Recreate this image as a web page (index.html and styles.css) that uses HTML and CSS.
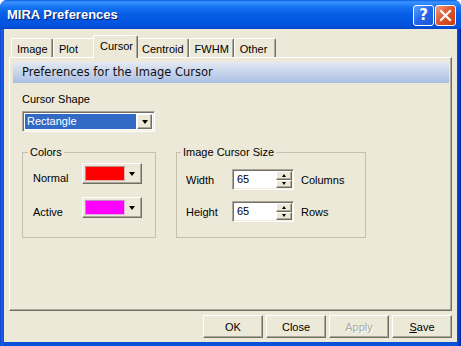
FILE: index.html
```html
<!DOCTYPE html>
<html lang="en">
<head>
    <meta charset="UTF-8">
    <title>MIRA Preferences</title>
    <link rel="stylesheet" href="styles.css">
</head>
<body>

<div class="window">
    <!-- Title bar -->
    <div class="titlebar">
        <span class="title">MIRA Preferences</span>
        <div class="caption-buttons">
            <span class="cap-btn help">?</span>
            <span class="cap-btn close">
                <svg width="19" height="19" viewBox="0 0 19 19"><path d="M5 5 L14 14 M14 5 L5 14" stroke="#fff" stroke-width="2.2" stroke-linecap="square"/></svg>
            </span>
        </div>
    </div>

    <div class="client">
        <!-- Tabs -->
        <div class="tabs">
            <span class="tab">Image</span>
            <span class="tab">Plot</span>
            <span class="tab active">Cursor</span>
            <span class="tab">Centroid</span>
            <span class="tab">FWHM</span>
            <span class="tab">Other</span>
        </div>

        <div class="panel">
            <div class="band">Preferences for the Image Cursor</div>

            <div class="panel-body">
                <div class="field-label">Cursor Shape</div>
                <div class="combo">
                    <span class="combo-sel">Rectangle</span>
                    <span class="drop-btn"><i class="arrow"></i></span>
                </div>

                <div class="groups">
                    <fieldset class="group colors">
                        <legend>Colors</legend>
                        <div class="row">
                            <span class="lbl">Normal</span>
                            <span class="color-btn"><span class="swatch red"></span><i class="arrow"></i></span>
                        </div>
                        <div class="row">
                            <span class="lbl">Active</span>
                            <span class="color-btn"><span class="swatch magenta"></span><i class="arrow"></i></span>
                        </div>
                    </fieldset>

                    <fieldset class="group size">
                        <legend>Image Cursor Size</legend>
                        <div class="row">
                            <span class="lbl">Width</span>
                            <span class="spin">
                                <span class="spin-val">65</span>
                                <span class="spin-btns">
                                    <span class="spin-btn"><i class="tri-up"></i></span>
                                    <span class="spin-btn"><i class="tri-down"></i></span>
                                </span>
                            </span>
                            <span class="unit">Columns</span>
                        </div>
                        <div class="row">
                            <span class="lbl">Height</span>
                            <span class="spin">
                                <span class="spin-val">65</span>
                                <span class="spin-btns">
                                    <span class="spin-btn"><i class="tri-up"></i></span>
                                    <span class="spin-btn"><i class="tri-down"></i></span>
                                </span>
                            </span>
                            <span class="unit">Rows</span>
                        </div>
                    </fieldset>
                </div>
            </div>
        </div>

        <!-- Dialog buttons -->
        <div class="buttons">
            <button class="btn">OK</button>
            <button class="btn">Close</button>
            <button class="btn" disabled>Apply</button>
            <button class="btn"><u>S</u>ave</button>
        </div>
    </div>
</div>

</body>
</html>
```

FILE: styles.css
```css
body {
    margin: 0;
    font-family: "Liberation Sans", Arial, sans-serif;
    font-size: 11px;
    color: #000;
    background: #fff;
}

.window {
    width: 461px;
    height: 346px;
    display: flex;
    flex-direction: column;
    border-radius: 7px 7px 0 0;
    overflow: hidden;
    background: linear-gradient(to right, #0a2fc0 0, #1a62ea 1px, #1558e4 3px, #0a4fd8 4px, #0a4fd8 457px, #0a3ac4 459px, #00209a 461px);
}

/* Title bar */
.titlebar {
    height: 29px;
    flex: 0 0 29px;
    display: flex;
    align-items: center;
    justify-content: space-between;
    padding: 0 5px 0 7px;
    box-sizing: border-box;
    background: linear-gradient(#0a5ee0 0, #3d93ff 2px, #2a85fb 4px, #1370f2 8px, #065fe6 14px, #0457e2 20px, #0353df 25px, #0048cc 29px);
}

.title {
    color: #fff;
    font-weight: bold;
    font-size: 13px;
    text-shadow: 1px 1px #0a2070;
}

.caption-buttons {
    display: flex;
    gap: 1px;
    padding-top: 1px;
}

.cap-btn {
    width: 21px;
    height: 21px;
    box-sizing: border-box;
    border: 1px solid #fff;
    border-radius: 3px;
    display: flex;
    align-items: center;
    justify-content: center;
    color: #fff;
}

.help {
    background: linear-gradient(135deg, #5da0ff, #2466e8 50%, #1a55d8);
    font: bold 15px "DejaVu Sans", sans-serif;
}

.close {
    background: linear-gradient(135deg, #f0a080, #e0582e 45%, #c83a10);
}

/* Client area */
.client {
    flex: 1;
    margin: 0 4px 4px;
    padding: 6px 5px 4px;
    background: #ece9d8;
    display: flex;
    flex-direction: column;
}

.tabs {
    display: flex;
    align-items: flex-end;
    height: 22px;
    flex: 0 0 22px;
    padding-left: 2px;
    position: relative;
    z-index: 1;
}

.tab {
    min-width: 42px;
    height: 19px;
    box-sizing: border-box;
    padding: 3px 4px 0 5px;
    border: 1px solid;
    border-bottom: none;
    border-color: #fff #716f64 transparent #fff;
    border-radius: 2px 2px 0 0;
    box-shadow: inset -1px 0 #aca899;
    background: #ece9d8;
    line-height: 14px;
}

.tab.active {
    min-width: 44px;
    height: 23px;
    margin: 0 -2px -1px;
    padding: 3px 4px 0 6px;
    position: relative;
}

.panel {
    flex: 0 0 254px;
    box-sizing: border-box;
    border: 1px solid;
    border-color: #fff #716f64 #716f64 #fff;
    box-shadow: inset -1px -1px #aca899;
    padding: 4px 2px 0 3px;
}

.band {
    height: 21px;
    line-height: 21px;
    padding-left: 9px;
    font-family: "DejaVu Sans", Verdana, sans-serif;
    font-size: 11.5px;
    color: #111;
    background: linear-gradient(#e4e9f3, #a9bfe4);
}

.panel-body {
    padding: 10px 0 0 9px;
}

.field-label {
    line-height: 13px;
}

/* Combo box */
.combo {
    width: 133px;
    height: 21px;
    margin-top: 5px;
    box-sizing: border-box;
    display: flex;
    padding: 2px;
    background: #fff;
    border: 1px solid;
    border-color: #aca899 #fff #fff #aca899;
    box-shadow: inset 1px 1px #716f64, inset -1px -1px #f1efe2;
}

.combo-sel {
    flex: 1;
    background: #316ac5;
    color: #fff;
    padding-left: 2px;
    line-height: 15px;
}

.drop-btn,
.spin-btn {
    box-sizing: border-box;
    display: flex;
    align-items: center;
    justify-content: center;
    background: #ece9d8;
    border: 1px solid;
    border-color: #fff #716f64 #716f64 #fff;
    box-shadow: inset -1px -1px #aca899;
}

.drop-btn {
    width: 15px;
    margin-left: 1px;
}

.arrow {
    width: 0;
    height: 0;
    border-left: 3.5px solid transparent;
    border-right: 3.5px solid transparent;
    border-top: 4px solid #000;
}

/* Group boxes */
.groups {
    display: flex;
    gap: 20px;
    margin-top: 14px;
}

.group {
    margin: 0;
    min-width: 0;
    box-sizing: border-box;
    border: 1px solid #c4c1b0;
}

.group legend {
    padding: 0 2px;
    margin-left: -5px;
    line-height: 13px;
}

.colors {
    width: 134px;
    padding: 4px 0 19px 10px;
}

.size {
    width: 190px;
    padding: 10px 0 15px 9px;
}

.row {
    display: flex;
    align-items: center;
}

.colors .row + .row {
    margin-top: 13px;
}

.size .row + .row {
    margin-top: 11px;
}

.colors .lbl {
    width: 49px;
    padding-top: 9px;
}

.size .lbl {
    width: 46px;
}

.color-btn {
    width: 60px;
    height: 21px;
    box-sizing: border-box;
    display: flex;
    align-items: center;
    padding: 0 5px 0 2px;
    gap: 4px;
    background: #ece9d8;
    border: 1px solid;
    border-color: #fff #716f64 #716f64 #fff;
    box-shadow: inset -1px -1px #aca899;
}

.swatch {
    width: 40px;
    height: 15px;
    box-sizing: border-box;
    border: 1px solid;
}

.swatch.red {
    background: #ff0000;
    border-color: #c08a8a #e0b0b0 #e0b0b0 #c08a8a;
}

.swatch.magenta {
    background: #ff00ff;
    border-color: #c08ac0 #e0b0e0 #e0b0e0 #c08ac0;
}

/* Spin edits */
.spin {
    width: 62px;
    height: 21px;
    box-sizing: border-box;
    display: flex;
    padding: 1px;
    background: #fff;
    border: 1px solid;
    border-color: #aca899 #fff #fff #aca899;
    box-shadow: inset 1px 1px #716f64, inset -1px -1px #f1efe2;
}

.spin-val {
    flex: 1;
    padding: 2px 0 0 3px;
    line-height: 13px;
}

.spin-btns {
    width: 16px;
    display: flex;
    flex-direction: column;
}

.spin-btn {
    flex: 1;
}

.tri-up,
.tri-down {
    width: 0;
    height: 0;
    border-left: 2.5px solid transparent;
    border-right: 2.5px solid transparent;
}

.tri-up {
    border-bottom: 3px solid #000;
}

.tri-down {
    border-top: 3px solid #000;
}

.unit {
    margin-left: 7px;
}

/* Dialog buttons */
.buttons {
    display: flex;
    justify-content: flex-end;
    gap: 3px;
    margin-top: 4px;
}

.btn {
    width: 60px;
    height: 23px;
    padding: 0;
    font: 11px "Liberation Sans", Arial, sans-serif;
    color: #000;
    background: #ece9d8;
    border: 1px solid;
    border-color: #fff #716f64 #716f64 #fff;
    box-shadow: inset -1px -1px #aca899;
    border-radius: 0;
}

.btn:disabled {
    color: #aca899;
    text-shadow: 1px 1px #fff;
}
```
